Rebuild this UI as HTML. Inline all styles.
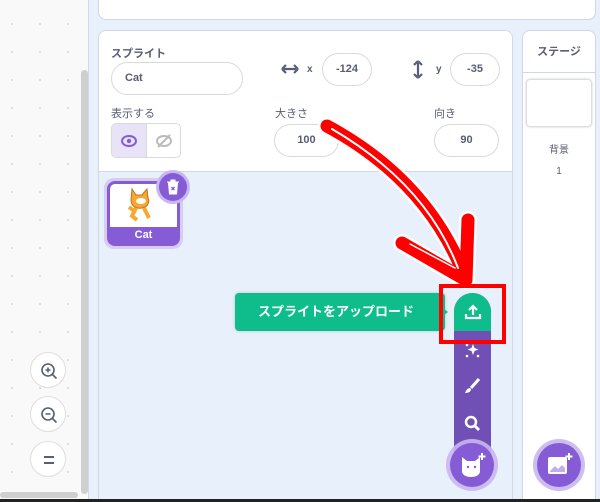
<!DOCTYPE html>
<html><head><meta charset="utf-8"><style>
*{box-sizing:border-box;margin:0;padding:0}
html,body{width:600px;height:502px;overflow:hidden}
body{position:relative;background:#e8f0fb;font-family:"Liberation Sans","Noto Sans CJK JP",sans-serif;color:#575e75}
.abs{position:absolute}
.ws{left:0;top:0;width:89px;height:500px;background:#f9f9f9;background-image:radial-gradient(#dcdcdc 1px,transparent 1.2px);background-size:28px 28px;background-position:-2px 10px;border-right:1px solid #d0d8e6}
.pill{position:absolute;border:1px solid #d9d9d9;border-radius:20px;background:#fff;font-size:11px;font-weight:bold;text-align:center;color:#575e75}
.lbl{position:absolute;font-size:11px;color:#575e75}
.zb{position:absolute;left:30px;width:36px;height:36px;border-radius:50%;border:1px solid #ddd;background:#fff}
</style></head><body>
<div class="abs ws"></div>
<div class="abs" style="left:81px;top:70px;width:7px;height:424px;background:#cfcfcf;border-radius:4px"></div>
<div class="abs" style="left:0;top:492px;width:78px;height:6px;background:#cfcfcf;border-radius:3px"></div>
<div class="zb" style="top:352px"><svg width="36" height="36" viewBox="0 0 36 36"><circle cx="17" cy="17" r="6" fill="none" stroke="#575e75" stroke-width="1.6"/><path d="M21.5 21.5l4 4M14.5 17h5M17 14.5v5" stroke="#575e75" stroke-width="1.6"/></svg></div>
<div class="zb" style="top:396px"><svg width="36" height="36" viewBox="0 0 36 36"><circle cx="17" cy="17" r="6" fill="none" stroke="#575e75" stroke-width="1.6"/><path d="M21.5 21.5l4 4M14.5 17h5" stroke="#575e75" stroke-width="1.6"/></svg></div>
<div class="zb" style="top:441px"><svg width="36" height="36" viewBox="0 0 36 36"><path d="M13 15h10M13 21h10" stroke="#575e75" stroke-width="2"/></svg></div>

<div class="abs" style="left:98px;top:-10px;width:498px;height:30px;background:#fff;border:1px solid #d0d8e6;border-radius:8px"></div>
<div class="abs" style="left:98px;top:30px;width:415px;height:480px;background:#e8f0fb;border:1px solid #d0d8e6;border-radius:8px;overflow:hidden">
 <div style="height:141px;background:#fff;border-bottom:1px solid #d0d8e6"></div>
</div>
<div class="abs" style="left:522px;top:30px;width:74px;height:480px;background:#fff;border:1px solid #d0d8e6;border-radius:8px">
 <div style="height:42px;border-bottom:1px solid #d0d8e6;font-size:11px;font-weight:bold;text-align:center;line-height:42px">ステージ</div>
 <div style="margin:6px 3px;height:48px;border:1px solid #ddd;border-radius:4px;box-shadow:0 0 2px #ccc"></div>
 <div style="text-align:center;font-size:10px;margin-top:14px">背景</div>
 <div style="text-align:center;font-size:10px;margin-top:10px">1</div>
</div>

<div class="lbl" style="left:111px;top:45px;font-weight:bold">スプライト</div>
<div class="pill" style="left:111px;top:62px;width:132px;height:33px;text-align:left;padding-left:13px;line-height:31px;font-weight:bold">Cat</div>
<svg class="abs" style="left:281px;top:63px" width="18" height="12"><path d="M3 6h12M1 6l4-4M1 6l4 4M17 6l-4-4M17 6l-4 4" stroke="#575e75" stroke-width="2.2" fill="none"/></svg>
<div class="lbl" style="left:307px;top:64px;font-weight:bold;font-size:10px">x</div>
<div class="pill" style="left:322px;top:53px;width:50px;height:33px;line-height:31px">-124</div>
<svg class="abs" style="left:412px;top:60px" width="12" height="19"><path d="M6 3v13M6 1L2 5M6 1l4 4M6 18l-4-4M6 18l4-4" stroke="#575e75" stroke-width="2.2" fill="none"/></svg>
<div class="lbl" style="left:436px;top:64px;font-weight:bold;font-size:10px">y</div>
<div class="pill" style="left:450px;top:53px;width:50px;height:33px;line-height:31px">-35</div>
<div class="lbl" style="left:111px;top:105px">表示する</div>
<div class="abs" style="left:111px;top:123px;width:70px;height:35px;border:1px solid #d9d9d9;border-radius:5px;overflow:hidden;background:#fff">
 <div style="width:35px;height:35px;background:#e9e3f7;border-right:1px solid #d9d9d9"></div>
 <svg class="abs" style="left:8px;top:8px" width="18" height="18"><ellipse cx="9" cy="9" rx="7" ry="5" fill="none" stroke="#855cd6" stroke-width="2"/><circle cx="9" cy="9" r="2.2" fill="#855cd6"/></svg>
 <svg class="abs" style="left:43px;top:8px" width="18" height="18"><ellipse cx="9" cy="9" rx="7" ry="5" fill="none" stroke="#bbb" stroke-width="2"/><path d="M3 15L15 3" stroke="#bbb" stroke-width="2"/></svg>
</div>
<div class="lbl" style="left:275px;top:105px">大きさ</div>
<div class="pill" style="left:274px;top:124px;width:65px;height:33px;line-height:31px">100</div>
<div class="lbl" style="left:434px;top:105px">向き</div>
<div class="pill" style="left:434px;top:124px;width:65px;height:33px;line-height:31px">90</div>

<div class="abs" style="left:104px;top:178px;width:79px;height:71px;border-radius:10px;background:#d9ccf3"></div>
<div class="abs" style="left:107px;top:181px;width:73px;height:65px;border-radius:8px;background:#855cd6;overflow:hidden">
 <div style="margin:3px 3px 0;height:43px;background:#fff;border-radius:5px 5px 0 0"></div>
 <div style="color:#fff;font-size:11px;font-weight:bold;text-align:center;line-height:17px">Cat</div>
</div>
<svg class="abs" style="left:124px;top:186px" width="34" height="36" viewBox="0 0 34 36"><path d="M8 3l4 6h6l5-6 1 9c2 4 0 9-6 10-6 1-11-2-11-8z" fill="#f7a830" stroke="#c07020"/><ellipse cx="17" cy="15" rx="5" ry="3" fill="#fff"/><path d="M12 22l-4 8 5 4M20 22l5 10M10 25l-5-4" stroke="#f7a830" stroke-width="4" fill="none"/></svg>
<div class="abs" style="left:156px;top:170px;width:34px;height:34px;border-radius:50%;background:#c9b6f0"></div>
<div class="abs" style="left:159px;top:173px;width:28px;height:28px;border-radius:50%;background:#855cd6"></div>
<svg class="abs" style="left:165px;top:178px" width="16" height="18"><path d="M2 4h12M6 4V2h4v2M3.5 5h9l-1 11h-7z" fill="#fff" stroke="#fff"/><path d="M6.5 9l3 3M9.5 9l-3 3" stroke="#855cd6" stroke-width="1.3"/></svg>

<div class="abs" style="left:235px;top:293px;width:210px;height:38px;background:#0fbd8c;border-radius:4px;color:#fff;font-size:13px;font-weight:bold;line-height:38px;padding-left:23px;box-shadow:0 0 3px rgba(0,0,0,.2)">スプライトをアップロード</div>
<div class="abs" style="left:443px;top:308px;border:4px solid transparent;border-left:5px solid #0fbd8c"></div>
<div class="abs" style="left:454px;top:293px;width:37px;height:180px;background:#7150b6;border-radius:19px 19px 0 0;overflow:hidden"><div style="height:38px;background:#0fbd8c"></div></div>
<svg class="abs" style="left:464px;top:303px" width="18" height="18"><path d="M9 12V3M5 7l4-4 4 4M2 11v4h14v-4" stroke="#fff" stroke-width="2.2" fill="none"/></svg>
<svg class="abs" style="left:463px;top:341px" width="18" height="18"><path d="M10 3l1.5 4 4 1.5-4 1.5L10 14l-1.5-4-4-1.5 4-1.5z" fill="#fff"/><circle cx="4" cy="4" r="1.3" fill="#fff"/><circle cx="4" cy="15" r="1.3" fill="#fff"/><circle cx="15" cy="15" r="1.3" fill="#fff"/></svg>
<svg class="abs" style="left:463px;top:377px" width="18" height="18"><path d="M16 2L8 11" stroke="#fff" stroke-width="3"/><path d="M7 11c-3 0-4 3-5 5 3 0 6-1 6-4z" fill="#fff"/></svg>
<svg class="abs" style="left:463px;top:414px" width="18" height="18"><circle cx="8" cy="8" r="5" fill="none" stroke="#fff" stroke-width="2.5"/><path d="M12 12l4 4" stroke="#fff" stroke-width="2.8"/></svg>
<div class="abs" style="left:446px;top:439px;width:52px;height:52px;border-radius:50%;background:#c9b6f0;opacity:.9"></div>
<div class="abs" style="left:450px;top:443px;width:44px;height:44px;border-radius:50%;background:#855cd6"></div>
<svg class="abs" style="left:458px;top:451px" width="30" height="28"><path d="M4 6l5 4h8l5-4v14c0 4-4 6-9 6s-9-2-9-6z" fill="#fff"/><path d="M24 2v7M20.5 5.5h7" stroke="#fff" stroke-width="2"/><circle cx="10" cy="16" r="1.2" fill="#855cd6"/><circle cx="17" cy="16" r="1.2" fill="#855cd6"/></svg>
<div class="abs" style="left:533px;top:439px;width:52px;height:52px;border-radius:50%;background:#c9b6f0;opacity:.9"></div>
<div class="abs" style="left:537px;top:443px;width:44px;height:44px;border-radius:50%;background:#855cd6"></div>
<svg class="abs" style="left:546px;top:452px" width="28" height="26"><rect x="2" y="5" width="19" height="17" rx="2" fill="#fff"/><path d="M4 19l5-5 3 3 4-4 3 3v4H4z" fill="#855cd6" opacity=".5"/><path d="M23 1v7M19.5 4.5h7" stroke="#fff" stroke-width="2"/></svg>

<svg class="abs" style="left:0;top:0" width="600" height="502">
<g fill="none" stroke-linecap="round" stroke-linejoin="round">
<path d="M327 126 C390 160 440 210 466 280 M402 243 L466 280 L468 220" stroke="#fff" stroke-width="18"/>
<path d="M327 126 C390 160 440 210 466 280 M402 243 L466 280 L468 220" stroke="#f00" stroke-width="13"/>
<path d="M332 129 C392 164 436 210 458 268" stroke="#fff" stroke-width="2"/>
<path d="M410 244 L455 268" stroke="#fff" stroke-width="1.5"/>
</g>
<rect x="441" y="286" width="63" height="56" fill="none" stroke="#f00" stroke-width="4"/>
<rect x="0" y="499" width="600" height="3" fill="#222"/>
</svg>
</body></html>
